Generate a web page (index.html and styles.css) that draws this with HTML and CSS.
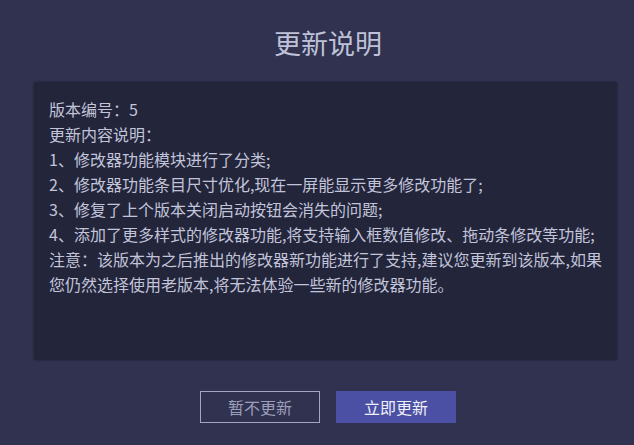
FILE: index.html
```html
<!DOCTYPE html>
<html lang="zh-CN">
<head>
<meta charset="utf-8">
<title>更新说明</title>
<link rel="stylesheet" href="styles.css">
</head>
<body>
<div class="dialog">
  <header class="header">
    <h1 class="title">更新说明</h1>
  </header>
  <div class="notes">
    <p>版本编号：5</p>
    <p>更新内容说明：</p>
    <p>1、修改器功能模块进行了分类;</p>
    <p>2、修改器功能条目尺寸优化,现在一屏能显示更多修改功能了;</p>
    <p>3、修复了上个版本关闭启动按钮会消失的问题;</p>
    <p>4、添加了更多样式的修改器功能,将支持输入框数值修改、拖动条修改等功能;</p>
    <p>注意：该版本为之后推出的修改器新功能进行了支持,建议您更新到该版本,如果您仍然选择使用老版本,将无法体验一些新的修改器功能。</p>
  </div>
  <div class="actions">
    <button class="btn btn-secondary">暂不更新</button>
    <button class="btn btn-primary">立即更新</button>
  </div>
</div>
</body>
</html>
```

FILE: styles.css
```css
html, body {
  margin: 0;
  padding: 0;
  background: #30324f;
  width: 634px;
  height: 445px;
  overflow: hidden;
}

.dialog {
  font-family: "Noto Sans CJK SC", "Noto Sans", sans-serif;
  color: #c2c4da;
  display: flex;
  flex-direction: column;
}

.header {
  height: 82px;
  box-sizing: border-box;
  padding-top: 23px;
  padding-left: 22px;
  text-align: center;
}

.title {
  margin: 0;
  font-size: 27px;
  line-height: 40px;
  font-weight: normal;
  color: #bfc1d8;
}

.notes {
  margin: 0 17px 0 34px;
  height: 278px;
  box-sizing: border-box;
  padding: 15px 9px 0 15px;
  background: #23253a;
  border-radius: 2px;
  box-shadow: 0 0 2px rgba(20, 21, 35, 0.8);
  font-size: 16px;
  line-height: 25px;
}

.notes p {
  margin: 0;
}

.actions {
  display: flex;
  justify-content: center;
  gap: 16px;
  padding-left: 22px;
  margin-top: 31px;
}

.btn {
  width: 120px;
  height: 32px;
  box-sizing: border-box;
  font-family: "Noto Sans CJK SC", "Noto Sans", sans-serif;
  font-size: 16px;
  padding: 0;
  cursor: pointer;
}

.btn-secondary {
  background: transparent;
  border: 1px solid #a3a5c2;
  color: #9c9eba;
}

.btn-primary {
  background: #4b50a4;
  border: none;
  color: #eef0fa;
}
```
